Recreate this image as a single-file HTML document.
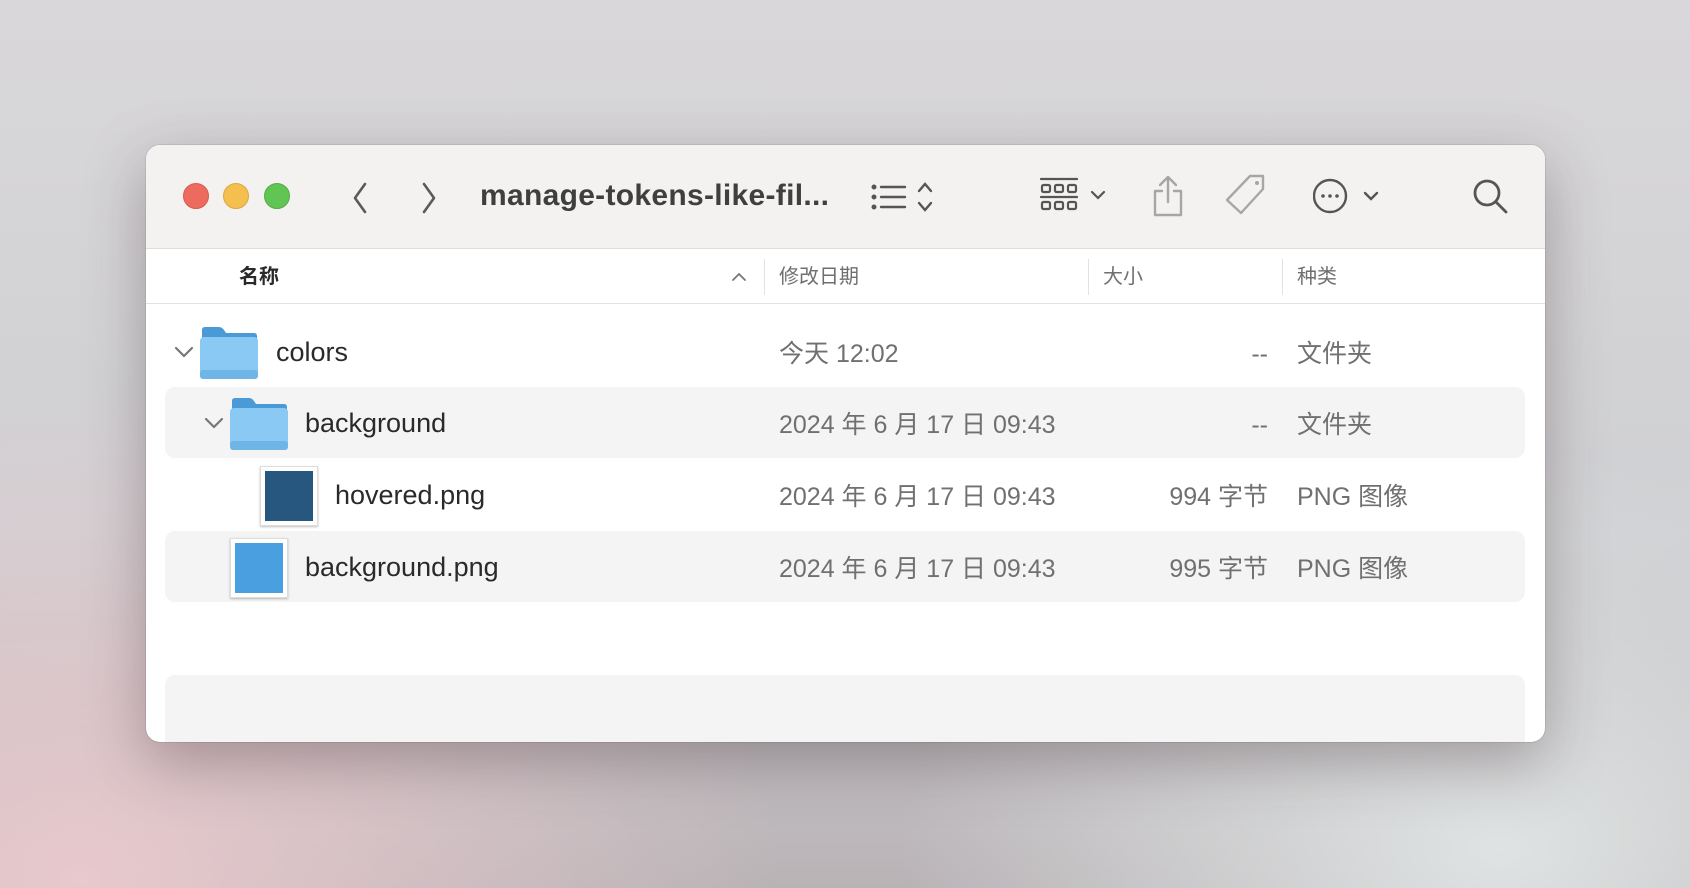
<!DOCTYPE html>
<html><head><meta charset="utf-8"><style>
*{margin:0;padding:0;box-sizing:border-box}
body{width:1690px;height:888px;overflow:hidden;position:relative;font-family:"Liberation Sans","Noto Sans CJK SC",sans-serif;
background:radial-gradient(ellipse 700px 500px at 80px 880px,#e8c9cd 0%,rgba(232,201,205,0) 100%),radial-gradient(ellipse 600px 400px at 1500px 850px,#dfe3e3 0%,rgba(223,227,227,0) 100%),linear-gradient(180deg,#d9d7d9 0%,#cfd0d3 60%,#b9b3b6 100%);}
.win{position:absolute;left:146px;top:145px;width:1399px;height:597px;border-radius:14px;background:#fff;overflow:hidden;box-shadow:0 20px 60px rgba(60,40,45,.35),0 0 0 1px rgba(0,0,0,.08)}
.tb{position:absolute;left:0;top:0;width:100%;height:104px;background:#f3f2f1;border-bottom:1px solid #dedddc}
.dot{position:absolute;top:38px;width:26px;height:26px;border-radius:50%}
.abs{position:absolute}
.title{position:absolute;left:334px;top:34px;font-size:30px;line-height:34px;font-weight:bold;color:#3f3f3f;letter-spacing:0.3px}
.hdr{position:absolute;top:104px;left:0;width:100%;height:55px;border-bottom:1px solid #e2e2e2;font-size:20px;color:#6f6f6f}
.hdr span{position:absolute;top:2px;line-height:52px}
.sep{position:absolute;top:10px;width:1px;height:36px;background:#e2e2e2}
.row{position:absolute;left:19px;width:1360px;height:71px;border-radius:10px;font-size:27px;color:#2a2a2a}
.row.hl{background:#f3f4f3}
.row span{position:absolute;top:1px;line-height:71px;white-space:nowrap}
.row span.d,.row span.s,.row span.k{top:3px}
.d{left:614px;color:#707070;font-size:25px}
.s{right:257px;color:#707070;text-align:right;font-size:25px}
.k{left:1132px;color:#707070;font-size:25px}
</style></head><body>
<div class="win">
 <div class="tb">
  <div class="dot" style="left:37px;background:#ed6a5e;border:1px solid #d65a4f"></div>
  <div class="dot" style="left:77px;background:#f5bf4f;border:1px solid #dda73e"></div>
  <div class="dot" style="left:118px;background:#61c554;border:1px solid #52ad45"></div>
  <svg class="abs" style="left:203px;top:36px" width="120" height="34" viewBox="0 0 120 34" fill="none" stroke="#5a5a5a" stroke-width="2.6" stroke-linecap="round" stroke-linejoin="round"><path d="M16 3 L6 17 L16 31"/><path d="M75 3 L85 17 L75 31"/></svg>
  <div class="title">manage-tokens-like-fil...</div>
  <svg class="abs" style="left:725px;top:34px" width="64" height="36" viewBox="0 0 64 36" fill="none" stroke="#555" stroke-width="2.4" stroke-linecap="round"><circle cx="3" cy="8" r="1.3" fill="#555"/><circle cx="3" cy="18" r="1.3" fill="#555"/><circle cx="3" cy="28" r="1.3" fill="#555"/><path d="M10 8H34M10 18H34M10 28H34"/><path d="M52 12 L58 5 L64 12" transform="translate(-4,0)"/><path d="M52 24 L58 31 L64 24" transform="translate(-4,0)"/></svg>
  <svg class="abs" style="left:893px;top:32px" width="70" height="40" viewBox="0 0 70 40" fill="none" stroke="#555" stroke-width="2.2" stroke-linecap="round"><path d="M2 2H38M2 20H38"/><rect x="3" y="8" width="8" height="7" rx="1.5"/><rect x="16" y="8" width="8" height="7" rx="1.5"/><rect x="29" y="8" width="8" height="7" rx="1.5"/><rect x="3" y="25" width="8" height="7" rx="1.5"/><rect x="16" y="25" width="8" height="7" rx="1.5"/><rect x="29" y="25" width="8" height="7" rx="1.5"/><path d="M53 15 L59 21 L65 15"/></svg>
  <svg class="abs" style="left:1004px;top:30px" width="36" height="44" viewBox="0 0 36 44" fill="none" stroke="#a6a6a6" stroke-width="2.4" stroke-linecap="round" stroke-linejoin="round"><path d="M18 2V27M10 10L18 2L26 10"/><path d="M12 16H5V40H31V16H24"/></svg>
  <svg class="abs" style="left:1078px;top:28px" width="44" height="44" viewBox="0 0 44 44" fill="none" stroke="#a6a6a6" stroke-width="2.4" stroke-linejoin="round"><path d="M26 3H39V16L17 40L3 27Z"/><circle cx="33" cy="10" r="2" fill="#a6a6a6" stroke="none"/></svg>
  <svg class="abs" style="left:1167px;top:32px" width="76" height="40" viewBox="0 0 76 40" fill="none" stroke="#555" stroke-width="2.4" stroke-linecap="round"><circle cx="17" cy="19" r="16"/><circle cx="10" cy="19" r="1.8" fill="#555" stroke="none"/><circle cx="17" cy="19" r="1.8" fill="#555" stroke="none"/><circle cx="24" cy="19" r="1.8" fill="#555" stroke="none"/><path d="M52 16 L58 22 L64 16"/></svg>
  <svg class="abs" style="left:1326px;top:33px" width="38" height="38" viewBox="0 0 38 38" fill="none" stroke="#555" stroke-width="2.8" stroke-linecap="round"><circle cx="15" cy="15" r="12"/><path d="M24 24L34 34"/></svg>
 </div>
 <div class="hdr">
  <span style="left:93px;color:#2a2a2a;font-weight:bold">名称</span>
  <svg class="abs" style="left:585px;top:23px" width="16" height="10" viewBox="0 0 16 10" fill="none" stroke="#777" stroke-width="1.8" stroke-linecap="round"><path d="M2 8L8 2L14 8"/></svg>
  <div class="sep" style="left:618px"></div><span style="left:633px">修改日期</span>
  <div class="sep" style="left:942px"></div><span style="left:957px">大小</span>
  <div class="sep" style="left:1136px"></div><span style="left:1151px">种类</span>
 </div>
 <div class="row" style="top:171px">
  <svg class="abs" style="left:9px;top:29px" width="20" height="14" viewBox="0 0 20 14" fill="none" stroke="#777" stroke-width="2.2" stroke-linecap="round"><path d="M2 3L10 11L18 3"/></svg>
  <svg class="abs" style="left:34px;top:10px" width="60" height="54" viewBox="0 0 60 54"><path d="M3 4Q3 1 6 1H20Q23 1 25 4L27 7H55Q58 7 58 10V20H3Z" fill="#4a9ad8"/><rect x="1" y="11" width="58" height="42" rx="4" fill="#89c9f3"/><rect x="1" y="44" width="58" height="9" rx="3" fill="#6fb5e6"/></svg>
  <span style="left:111px">colors</span><span class="d">今天 12:02</span><span class="s">--</span><span class="k">文件夹</span>
 </div>
 <div class="row hl" style="top:242px">
  <svg class="abs" style="left:39px;top:29px" width="20" height="14" viewBox="0 0 20 14" fill="none" stroke="#777" stroke-width="2.2" stroke-linecap="round"><path d="M2 3L10 11L18 3"/></svg>
  <svg class="abs" style="left:64px;top:10px" width="60" height="54" viewBox="0 0 60 54"><path d="M3 4Q3 1 6 1H20Q23 1 25 4L27 7H55Q58 7 58 10V20H3Z" fill="#4a9ad8"/><rect x="1" y="11" width="58" height="42" rx="4" fill="#89c9f3"/><rect x="1" y="44" width="58" height="9" rx="3" fill="#6fb5e6"/></svg>
  <span style="left:140px">background</span><span class="d">2024 年 6 月 17 日 09:43</span><span class="s">--</span><span class="k">文件夹</span>
 </div>
 <div class="row" style="top:314px">
  <div class="abs" style="left:95px;top:7px;width:58px;height:60px;background:#fff;border:1px solid #ddd;box-shadow:0 1px 2px rgba(0,0,0,.25);padding:4px"><div style="width:100%;height:100%;background:#27567f"></div></div>
  <span style="left:170px">hovered.png</span><span class="d">2024 年 6 月 17 日 09:43</span><span class="s">994 字节</span><span class="k">PNG 图像</span>
 </div>
 <div class="row hl" style="top:386px">
  <div class="abs" style="left:65px;top:7px;width:58px;height:60px;background:#fff;border:1px solid #ddd;box-shadow:0 1px 2px rgba(0,0,0,.25);padding:4px"><div style="width:100%;height:100%;background:#4a9fe0"></div></div>
  <span style="left:140px">background.png</span><span class="d">2024 年 6 月 17 日 09:43</span><span class="s">995 字节</span><span class="k">PNG 图像</span>
 </div>
 <div class="row hl" style="top:530px;height:90px"></div>
</div>
</body></html>
